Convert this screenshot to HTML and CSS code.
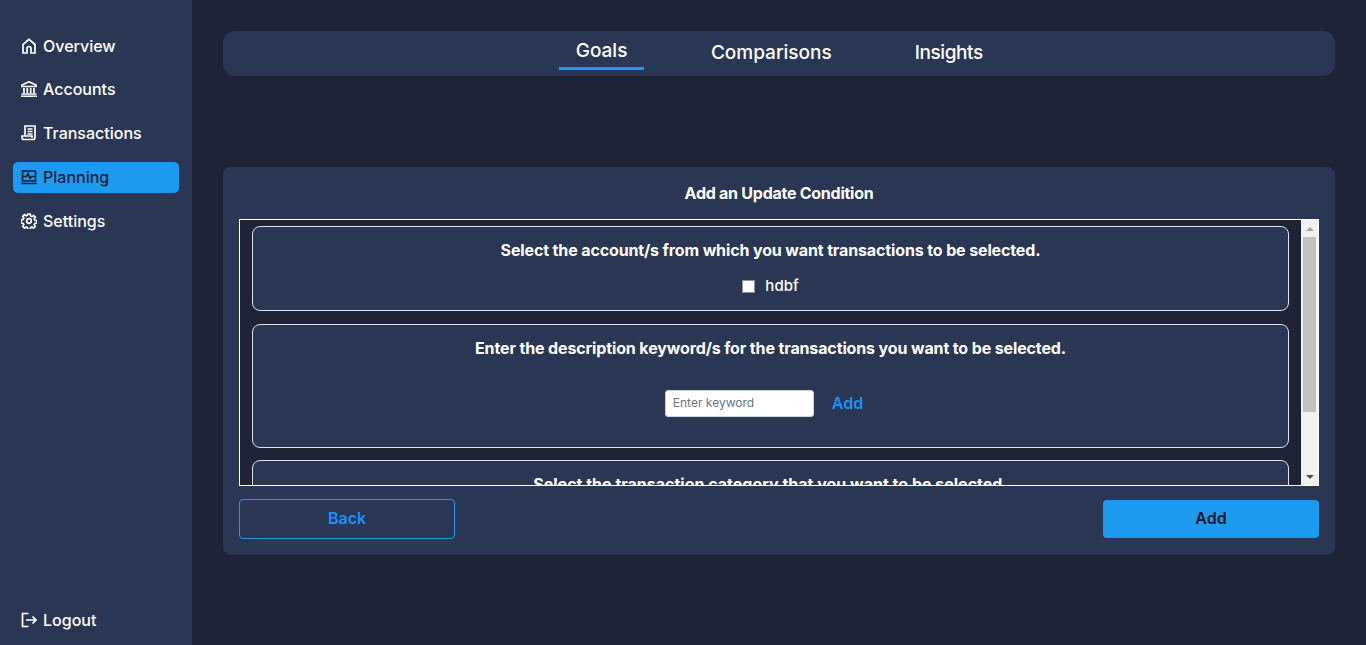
FILE: index.html
```html
<!DOCTYPE html>
<html lang="en-US">
<head>
	<meta charset="UTF-8">
	<title>Planning</title>
	<link rel="stylesheet" href="styles.css">
</head>
<body>
	<div class="app">
		<aside class="sidebar">
			<nav class="side_nav">
				<a class="side_item" href="#">
					<svg class="side_icon" viewBox="0 0 16 16"><path d="M2 15V6.500L8 1.300l6 5.200V15h-4v-4.500a2 2 0 0 0-4 0V15z"/></svg>
					Overview
				</a>
				<a class="side_item" href="#">
					<svg class="side_icon" viewBox="0 0 16 16"><path d="M8 .8 15 4v1.500H1V4z"/><path d="M3 7v5M6.300 7v5M9.700 7v5M13 7v5M.5 13h15M0 15.300h16"/></svg>
					Accounts
				</a>
				<a class="side_item" href="#">
					<svg class="side_icon" viewBox="0 0 16 16"><path d="M4 11V1h10v11a3 3 0 0 1-1 2.500H3a2 2 0 0 1-2-2V11h10v2"/><path d="M6.500 4h5M6.500 6.500h5M6.500 9h5"/></svg>
					Transactions
				</a>
				<a class="side_item active" href="#">
					<svg class="side_icon" viewBox="0 0 16 16"><path d="M1.500 2h13v10h-13zM0 14.500h16"/><path d="M2 7.500h3.500l1.500-3 2 5 1.500-2H14"/></svg>
					Planning
				</a>
				<a class="side_item" href="#">
					<svg class="side_icon" viewBox="0 0 16 16"><circle cx="8" cy="8" r="2.300"/><path d="M6.800 1h2.400l.4 2 1.300.6 1.700-1.100 1.700 1.700-1.100 1.700.6 1.300 2 .4v2.400l-2 .4-.6 1.300 1.100 1.700-1.700 1.700-1.700-1.100-1.300.6-.4 2H6.800l-.4-2-1.300-.6-1.700 1.100-1.700-1.700 1.100-1.700-.6-1.300-2-.4V6.800l2-.4.600-1.300L1.700 3.400l1.700-1.700 1.700 1.100 1.300-.6z"/></svg>
					Settings
				</a>
			</nav>
			<a class="side_item logout" href="#">
				<svg class="side_icon" viewBox="0 0 16 16"><path d="M7.500 1.500h-6v13h6M5 8h10M11.500 4.500 15 8l-3.500 3.500"/></svg>
				Logout
			</a>
		</aside>

		<main class="content">
			<div class="tabs">
				<a class="tab active" href="#">Goals</a>
				<a class="tab" href="#">Comparisons</a>
				<a class="tab tab_narrow" href="#">Insights</a>
			</div>

			<section class="panel">
				<h2 class="panel_title">Add an Update Condition</h2>
				<div class="scroll_box">
					<div class="scroll_list">
						<div class="card card_account">
							<h3>Select the account/s from which you want transactions to be selected.</h3>
							<label class="check"><span class="check_box"></span>hdbf</label>
						</div>
						<div class="card card_keyword">
							<h3>Enter the description keyword/s for the transactions you want to be selected.</h3>
							<div class="keyword_row">
								<input class="keyword_input" type="text" placeholder="Enter keyword">
								<a class="link_add" href="#">Add</a>
							</div>
						</div>
						<div class="card card_category">
							<h3>Select the transaction category that you want to be selected.</h3>
						</div>
					</div>
					<!--headless browser hides real scrollbars, so this one is drawn-->
					<div class="scrollbar">
						<div class="scroll_btn"><span class="arrow_up"></span></div>
						<div class="scroll_track"><div class="scroll_thumb"></div></div>
						<div class="scroll_btn"><span class="arrow_down"></span></div>
					</div>
				</div>
				<div class="panel_btns">
					<button class="btn btn_back">Back</button>
					<button class="btn btn_add">Add</button>
				</div>
			</section>
		</main>
	</div>
</body>
</html>
```

FILE: styles.css
```css
*{
	padding:0;
	margin:0;
	box-sizing:border-box;
}
html,body{
	height:100%;
	overflow:hidden;
}
body{
	background:#1e2336;
	color:#fff;
	font-family:"Inter","Liberation Sans",sans-serif;
}
a{
	color:inherit;
	text-decoration:none;
}
.app{
	display:flex;
	height:100%;
}

/**sidebar**/
.sidebar{
	width:192px;
	flex:none;
	background:#2a3754;
	padding:31px 13px 9px;
	display:flex;
	flex-direction:column;
	justify-content:space-between;
}
.side_nav{
	display:flex;
	flex-direction:column;
	gap:12.75px;
}
.side_item{
	height:31px;
	display:flex;
	align-items:center;
	gap:6px;
	padding:0 8px 2px;
	border-radius:5px;
	font-size:16px;
	font-weight:500;
	color:#fff;
}
.side_item.active{
	background:#1d9bf0;
	color:#14203a;
}
.side_icon{
	width:16px;
	height:16px;
	flex:none;
	fill:none;
	stroke:currentColor;
	stroke-width:1.700;
}

/**main column**/
.content{
	flex:1;
	padding:31px 31px 0;
}
.tabs{
	height:45px;
	background:#2a3754;
	border-radius:12px;
	display:flex;
	justify-content:center;
	align-items:center;
	gap:51px;
}
.tab{
	padding:0 16px 2px;
	font-size:19px;
	font-weight:500;
	line-height:27px;
}
.tab.active{
	padding:0 16.5px 3px;
	border-bottom:3px solid #1d9bf0;
}
.tab_narrow{
	letter-spacing:-0.4px;
}

/**panel**/
.panel{
	margin-top:91px;
	height:388px;
	background:#2a3754;
	border-radius:8px;
	padding:16px;
	display:flex;
	flex-direction:column;
}
.panel_title{
	font-size:16px;
	font-weight:700;
	letter-spacing:-0.26px;
	text-align:center;
	line-height:21px;
	margin-bottom:15px;
}
.scroll_box{
	height:267px;
	flex:none;
	border:1px solid #fff;
	background:#1e2336;
	display:flex;
	overflow:hidden;
}
.scroll_list{
	flex:1;
	min-width:0;
	padding:6px 12px 0;
	overflow:hidden;
	display:flex;
	flex-direction:column;
	gap:13px;
}
.scrollbar{
	width:17px;
	flex:none;
	background:#f1f1f1;
	display:flex;
	flex-direction:column;
}
.scroll_btn{
	height:17px;
	flex:none;
	display:flex;
	justify-content:center;
	align-items:center;
}
.arrow_up{
	border-left:4px solid transparent;
	border-right:4px solid transparent;
	border-bottom:4px solid #a3a3a3;
}
.arrow_down{
	border-left:4px solid transparent;
	border-right:4px solid transparent;
	border-top:4px solid #505050;
}
.scroll_track{
	flex:1;
	padding:0 2px;
}
.scroll_thumb{
	height:175px;
	background:#c1c1c1;
}
.card{
	flex:none;
	background:#2a3754;
	border:1px solid #dfe2e8;
	border-radius:8px;
	padding:13px 12px 0;
	text-align:center;
}
.card h3{
	font-size:16px;
	font-weight:700;
	letter-spacing:-0.13px;
	line-height:20px;
}
.card_account{
	height:85px;
}
.card_keyword{
	height:124px;
}
.card_category{
	height:110px;
	margin-top:-1px;
}
.card_category h3{
	letter-spacing:0;
}
.check{
	margin-top:16px;
	display:flex;
	justify-content:center;
	align-items:center;
	gap:10px;
	font-size:15px;
	font-weight:500;
	line-height:20px;
}
.check_box{
	width:13px;
	height:13px;
	background:#fff;
	border:1px solid #8a8f99;
}
.keyword_row{
	margin-top:32px;
	margin-right:13px;
	display:flex;
	justify-content:center;
	align-items:center;
	gap:18px;
}
.keyword_input{
	width:149px;
	height:27px;
	background:#fff;
	border:1px solid #ced4da;
	border-radius:3px;
	padding:0 7px 2px;
	font-family:inherit;
	font-size:12px;
}
.keyword_input::placeholder{
	color:#6c757d;
}
.link_add{
	color:#1e90ff;
	font-size:16px;
	font-weight:600;
	padding-bottom:2px;
}

/**bottom buttons**/
.panel_btns{
	margin-top:13px;
	display:flex;
	justify-content:space-between;
	align-items:center;
}
.btn{
	width:216px;
	border-radius:4px;
	padding-bottom:2px;
	font-family:inherit;
	font-size:16px;
	font-weight:600;
}
.btn_back{
	height:40px;
	background:transparent;
	border:1px solid #1d9bf0;
	color:#1e90ff;
}
.btn_add{
	height:38px;
	background:#1d9bf0;
	border:none;
	color:#0d1526;
}
```
